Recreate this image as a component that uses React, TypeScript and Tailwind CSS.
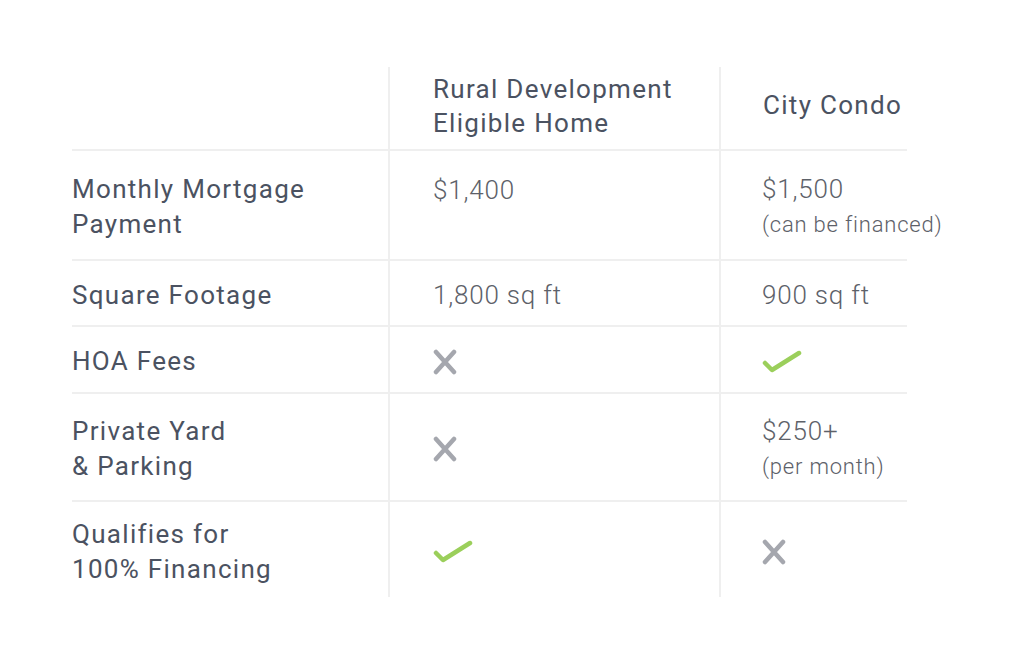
import React from 'react';

type Cell =
  | { kind: 'text'; main: string; sub?: string; top?: boolean }
  | { kind: 'yes' }
  | { kind: 'no' };

type Row = { label: string[]; h: string; cells: Cell[] };

const ROWS: Row[] = [
  {
    label: ['Monthly Mortgage', 'Payment'],
    h: 'h-[110px]',
    cells: [
      { kind: 'text', main: '$1,400', top: true },
      { kind: 'text', main: '$1,500', sub: '(can be financed)' },
    ],
  },
  {
    label: ['Square Footage'],
    h: 'h-[66px]',
    cells: [
      { kind: 'text', main: '1,800 sq ft' },
      { kind: 'text', main: '900 sq ft' },
    ],
  },
  {
    label: ['HOA Fees'],
    h: 'h-[67px]',
    cells: [{ kind: 'no' }, { kind: 'yes' }],
  },
  {
    label: ['Private Yard', '& Parking'],
    h: 'h-[108px]',
    cells: [{ kind: 'no' }, { kind: 'text', main: '$250+', sub: '(per month)' }],
  },
  {
    label: ['Qualifies for', '100% Financing'],
    h: 'h-[97px]',
    cells: [{ kind: 'yes' }, { kind: 'no' }],
  },
];

const Cross = () => (
  <svg width="24" height="26" viewBox="0 0 24 26" className="block">
    <path d="M3 3 L21 23 M21 3 L3 23" stroke="#a5a7ae" strokeWidth="4.5" strokeLinecap="round" fill="none" />
  </svg>
);

const Check = () => (
  <svg width="40" height="26" viewBox="0 0 40 26" className="block">
    <path d="M3 14 L10 21 L37 4" stroke="#9bcf5b" strokeWidth="4.5" strokeLinecap="round" strokeLinejoin="round" fill="none" />
  </svg>
);

const ValueCell = ({ cell }: { cell: Cell }) => {
  if (cell.kind === 'yes') return <Check />;
  if (cell.kind === 'no') return <Cross />;
  return (
    <div className="font-light text-[#5d6169] tracking-[0.05em] whitespace-nowrap">
      <div className="text-[26px] leading-[35px]">{cell.main}</div>
      {cell.sub && <div className="text-[22px] leading-[36px]">{cell.sub}</div>}
    </div>
  );
};

export default function App() {
  return (
    <div
      className="w-[1024px] h-[658px] bg-white pt-[67px] pl-[72px]"
      style={{ fontFamily: 'Roboto, "Open Sans", sans-serif' }}
    >
      <div className="grid grid-cols-[316px_331px_188px]">
        {/* header */}
        <div className="h-[82px]" />
        <div className="h-[82px] border-l-2 border-[#efefef] pl-[43px] pb-[5px] flex flex-col justify-center text-[26px] leading-[34px] tracking-[0.05em] text-[#4b5261]">
          <div>Rural Development</div>
          <div>Eligible Home</div>
        </div>
        <div className="h-[82px] border-l-2 border-[#efefef] pl-[42px] pb-[6px] flex flex-col justify-center text-[26px] leading-[34px] tracking-[0.05em] text-[#4b5261] whitespace-nowrap">
          City Condo
        </div>

        {ROWS.map((row) => (
          <React.Fragment key={row.label.join(' ')}>
            <div className={`${row.h} border-t-2 border-[#efefef] pt-[4px] flex flex-col justify-center text-[26px] leading-[35px] tracking-[0.05em] text-[#4b5261]`}>
              {row.label.map((l) => (
                <div key={l}>{l}</div>
              ))}
            </div>
            {row.cells.map((cell, i) => {
              const isTop = cell.kind === 'text' && cell.top;
              return (
                <div
                  key={i}
                  className={`${row.h} border-t-2 border-l-2 border-[#efefef] flex flex-col ${
                    isTop ? 'justify-start pt-[22px]' : 'justify-center pt-[4px]'
                  } ${i === 0 ? 'pl-[43px]' : 'pl-[41px]'}`}
                >
                  <ValueCell cell={cell} />
                </div>
              );
            })}
          </React.Fragment>
        ))}
      </div>
    </div>
  );
}
